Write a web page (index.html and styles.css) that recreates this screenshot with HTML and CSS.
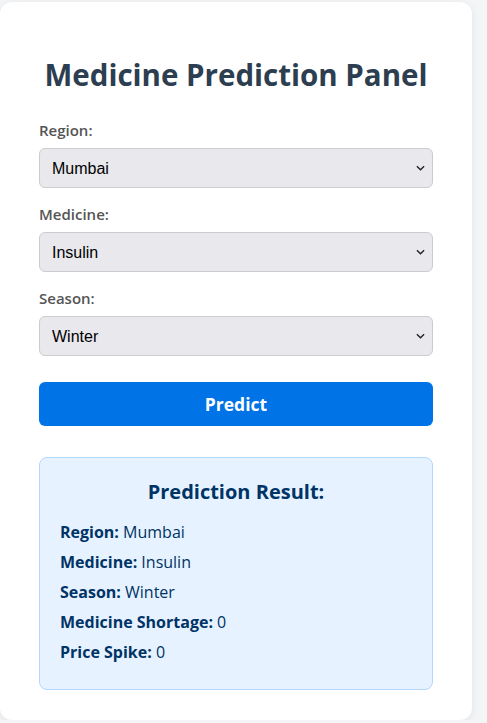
FILE: index.html
```html
<!DOCTYPE html>
<html>
<head>
<meta charset="utf-8">
<link rel="stylesheet" href="styles.css">
</head>
<body>
<div class="card">
  <h1 class="title">Medicine Prediction Panel</h1>
  <form class="form">
    <div class="field">
      <label class="label">Region:</label>
      <div class="select-wrap">
        <select class="select"><option>Mumbai</option></select>
        <svg class="chev" width="10" height="6" viewBox="0 0 10 6"><path d="M1 1 L5 5 L9 1" fill="none" stroke="#222" stroke-width="1.5"/></svg>
      </div>
    </div>
    <div class="field">
      <label class="label">Medicine:</label>
      <div class="select-wrap">
        <select class="select"><option>Insulin</option></select>
        <svg class="chev" width="10" height="6" viewBox="0 0 10 6"><path d="M1 1 L5 5 L9 1" fill="none" stroke="#222" stroke-width="1.5"/></svg>
      </div>
    </div>
    <div class="field">
      <label class="label">Season:</label>
      <div class="select-wrap">
        <select class="select"><option>Winter</option></select>
        <svg class="chev" width="10" height="6" viewBox="0 0 10 6"><path d="M1 1 L5 5 L9 1" fill="none" stroke="#222" stroke-width="1.5"/></svg>
      </div>
    </div>
    <button type="button" class="btn">Predict</button>
  </form>
  <div class="result">
    <h2 class="result-title">Prediction Result:</h2>
    <p class="line"><b>Region:</b> Mumbai</p>
    <p class="line"><b>Medicine:</b> Insulin</p>
    <p class="line"><b>Season:</b> Winter</p>
    <p class="line"><b>Medicine Shortage:</b> 0</p>
    <p class="line"><b>Price Spike:</b> 0</p>
  </div>
</div>
</body>
</html>
```
FILE: styles.css
```css
* { box-sizing: border-box; }
body {
  margin: 0;
  background: #f4f5f7;
  font-family: "Open Sans", sans-serif;
}
.card {
  width: 472px;
  margin-top: 2px;
  background: #fff;
  border-radius: 12px;
  box-shadow: 0 2px 10px rgba(0,0,0,0.08);
  padding: 53px 39px 30px;
}
.title {
  margin: 0 0 25px;
  text-align: center;
  font-size: 29.5px;
  line-height: 40px;
  font-weight: 700;
  color: #2c3e50;
}
.form { display: flex; flex-direction: column; }
.field { display: flex; flex-direction: column; gap: 8px; margin-bottom: 16px; }
.label {
  font-size: 15px;
  line-height: 20px;
  font-weight: 600;
  color: #555;
}
.select-wrap { position: relative; }
.select {
  display: block;
  height: 40px;
  width: 100%;
  padding: 0 12px;
  font-family: "Liberation Sans", Arial, sans-serif;
  font-size: 16px;
  color: #000;
  background-color: #e8e8ed;
  border: 1px solid #ccc;
  border-radius: 6px;
  appearance: none;
  -webkit-appearance: none;
}
.chev {
  position: absolute;
  right: 8px;
  top: 17px;
  width: 9px;
  height: 6px;
  pointer-events: none;
}
.btn {
  margin-top: 10px;
  height: 44px;
  width: 100%;
  border: none;
  border-radius: 6px;
  background: #0073e6;
  color: #fff;
  font-family: "Open Sans", sans-serif;
  font-size: 17.5px;
  font-weight: 700;
}
.result {
  margin-top: 31px;
  background: #e6f2ff;
  border: 1px solid #b3d7ff;
  border-radius: 8px;
  padding: 20px 20px 22px;
  color: #003366;
}
.result-title {
  margin: 0 0 11px;
  text-align: center;
  font-size: 20px;
  line-height: 28px;
  font-weight: 700;
}
.line {
  margin: 0;
  font-size: 16px;
  line-height: 30px;
}
```
